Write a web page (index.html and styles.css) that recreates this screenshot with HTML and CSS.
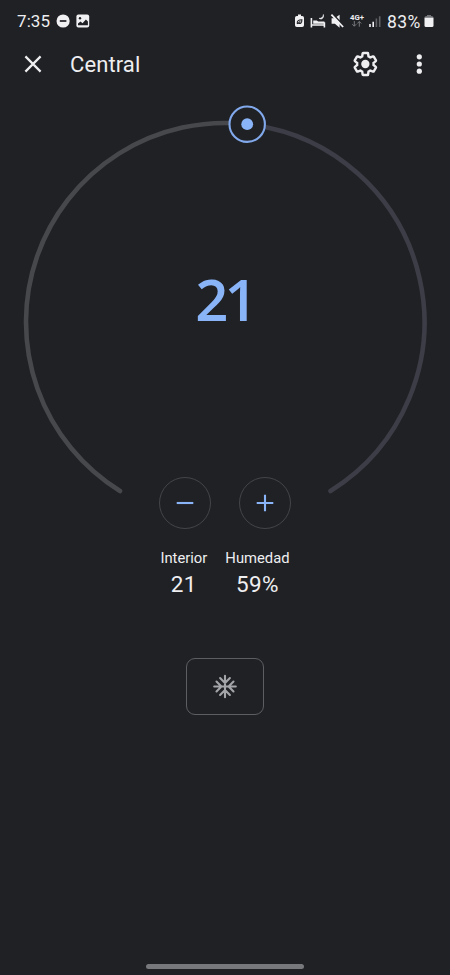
FILE: index.html
```html
<!DOCTYPE html>
<html lang="es">
<head>
<meta charset="utf-8">
<title>Central</title>
<link rel="stylesheet" href="styles.css">
</head>
<body>
<div class="screen">
  <div class="status">
    <span class="time">7:35</span>
    <svg class="notices" width="36" height="16" viewBox="0 0 36 16">
      <circle cx="8.1" cy="8" r="6.6" fill="#f1f1f4"/>
      <path d="M4.8 8h6.6" stroke="#202124" stroke-width="1.7"/>
      <rect x="21.4" y="1.6" width="12.8" height="12.8" rx="2" fill="#f1f1f4"/>
      <path d="M23 12.2v-1.7l2.5-2 2 1.7 3.4-3.6 2 2v3.6z" fill="#202124"/>
      <circle cx="25" cy="5.2" r="1.2" fill="#202124"/>
    </svg>
    <svg class="system" width="90" height="18" viewBox="0 0 90 18">
      <path d="M3 2.5h3V4h1.2Q9 4 9 5.8v7.4q0 1.8-1.8 1.8H1.8Q0 15 0 13.2V5.8Q0 4 1.8 4H3z" fill="#f1f1f4"/>
      <path d="M2.3 11.8c-.5-3 1.4-4 4.6-4.1.1 3.2-1.6 4.4-3.4 3.5m-1.2.6 3-2.5" fill="none" stroke="#202124" stroke-width="1.1"/>
      <path d="M16.4 6v9.6M16.4 13h13M29.4 10.2v5.4" fill="none" stroke="#f1f1f4" stroke-width="1.6"/>
      <path d="M18.2 8.5h3.5l1.5 1h6.2v2.2H18.2z" fill="#f1f1f4"/>
      <path d="M28.4 2.5c-.2 2.7-1.8 4-4.3 3.8 2.1 1.7 5.1.2 4.3-3.8" fill="#f1f1f4" stroke="#f1f1f4" stroke-width=".6"/>
      <path d="M36.6 6.3h3l5-3.6v13l-4.7-4h-3.3z" fill="#f1f1f4"/>
      <path d="M37.8 2.1 49.3 14.3" stroke="#202124" stroke-width="1.6"/>
      <path d="M36.4 2.6 48.1 15" stroke="#f1f1f4" stroke-width="1.8"/>
      <text class="network" x="55" y="7.6" textLength="14" lengthAdjust="spacingAndGlyphs">4G+</text>
      <path d="M59.3 9v5.2m-2-2 2 2 2-2M64.3 14.7V9.5m-2 2 2-2 2 2" fill="none" stroke="#77797d" stroke-width="1"/>
      <path d="M75 12v3M78.2 9.7V15" stroke="#f1f1f4" stroke-width="1.6"/>
      <path d="M81.4 6.5V15M84.7 4.2V15" stroke="#606266" stroke-width="1.6"/>
    </svg>
    <span class="percent">83%</span>
    <svg class="battery" width="10" height="14" viewBox="0 0 10 14">
      <path d="M3 1h4v1h.6Q9.5 2 9.5 4H.5q0-2 1.9-2H3z" fill="#727377"/>
      <path d="M.5 3.7h9v7.8q0 1.5-1.5 1.5H2Q.5 13 .5 11.5z" fill="#f1f1f4"/>
    </svg>
  </div>

  <div class="toolbar">
    <svg class="close" width="18" height="18" viewBox="0 0 18 18">
      <path d="m1.4 1.4 15.2 15.2M16.6 1.4 1.4 16.6" stroke="#eeeef1" stroke-width="2.2"/>
    </svg>
    <h1 class="title">Central</h1>
    <svg class="gear" width="28" height="28" viewBox="0 0 24 24">
      <g transform="translate(12.3 12) scale(.94) translate(-12 -12)">
        <path fill="none" stroke="#eeeef1" stroke-width="2.2" d="M19.43 12.98c.04-.32.07-.64.07-.98s-.03-.66-.07-.98l2.11-1.65c.19-.15.24-.42.12-.64l-2-3.46c-.09-.16-.26-.25-.44-.25-.06 0-.12.01-.17.03l-2.49 1c-.52-.4-1.08-.73-1.69-.98l-.38-2.65C14.46 2.18 14.25 2 14 2h-4c-.25 0-.46.18-.49.42l-.38 2.65c-.61.25-1.17.59-1.69.98l-2.49-1c-.06-.02-.12-.03-.18-.03-.17 0-.34.09-.43.25l-2 3.46c-.13.22-.07.49.12.64l2.11 1.65c-.04.32-.07.65-.07.98s.03.66.07.98l-2.11 1.65c-.19.15-.24.42-.12.64l2 3.46c.09.16.26.25.44.25.06 0 .12-.01.17-.03l2.49-1c.52.4 1.08.73 1.69.98l.38 2.65c.03.24.24.42.49.42h4c.25 0 .46-.18.49-.42l.38-2.65c.61-.25 1.17-.59 1.69-.98l2.49 1c.06.02.12.03.18.03.17 0 .34-.09.43-.25l2-3.46c.12-.22.07-.49-.12-.64z"/>
        <circle cx="12" cy="12" r="3.8" fill="#eeeef1"/>
      </g>
    </svg>
    <svg class="more" width="6" height="20" viewBox="0 0 6 20" fill="#eeeef1">
      <circle cx="3.3" cy="2.8" r="2.6"/><circle cx="3.3" cy="10" r="2.6"/><circle cx="3.3" cy="17.2" r="2.6"/>
    </svg>
  </div>

  <div class="dial">
    <svg class="arc" width="450" height="400" viewBox="0 100 450 400" fill="none">
      <path d="M120 491A199 199 0 0 1 247.2 124.2" stroke="#47484b" stroke-width="4.6" stroke-linecap="round"/>
      <path d="M247.2 124.2A199 199 0 0 1 330.5 491" stroke="#3c3d47" stroke-width="4.6" stroke-linecap="round"/>
      <circle cx="247.2" cy="124.2" r="17.7" fill="#202124" stroke="#81a9ec" stroke-width="2.1"/>
      <circle cx="247.2" cy="124.2" r="5.9" fill="#8ab4f8"/>
    </svg>
    <div class="target">21</div>
  </div>

  <div class="controls">
    <div class="round"><svg width="18" height="18" viewBox="0 0 18 18"><path d="M.7 9h16.6" stroke="#8ab4f8" stroke-width="2.1"/></svg></div>
    <div class="round"><svg width="18" height="18" viewBox="0 0 18 18"><path d="M.7 9h16.6M9 .7v16.6" stroke="#8ab4f8" stroke-width="2.1"/></svg></div>
  </div>

  <div class="readings">
    <div class="reading"><span class="label">Interior</span><span class="value">21</span></div>
    <div class="reading"><span class="label">Humedad</span><span class="value">59%</span></div>
  </div>

  <div class="mode">
    <svg width="26" height="26" viewBox="-13 -12.5 26 26" fill="none" stroke="#a3a5a9" stroke-width="2.1" stroke-linecap="round">
      <path d="M0-10.8v21.6M-10.8 0h21.6M-4.9-8.5 0-3.6l4.9-4.9M-4.9 8.5 0 3.6l4.9 4.9M-8.5-4.9-3.6 0l-4.9 4.9M8.5-4.9 3.6 0l4.9 4.9"/>
    </svg>
  </div>

  <div class="home"></div>
</div>
</body>
</html>
```
FILE: styles.css
```css
* { box-sizing: border-box; }
body { margin: 0; background: #202124; }
svg { display: block; flex: none; }
.screen {
  width: 450px;
  height: 975px;
  display: flex;
  flex-direction: column;
  align-items: center;
  overflow: hidden;
  background: #202124;
  color: #eeeef1;
  font-family: Roboto, sans-serif;
}
.status {
  width: 450px;
  height: 42px;
  padding: 0 16px 0 17px;
  display: flex;
  align-items: center;
  font-size: 17px;
  line-height: 20px;
}
.time { width: 38px; letter-spacing: .1px; }
.system { margin: 0 2px 0 auto; }
.network { font: 700 7px Roboto, sans-serif; fill: #eeeef1; }
.percent { width: 37px; padding-top: 1px; font-size: 17.5px; letter-spacing: .4px; white-space: nowrap; }
.toolbar {
  width: 450px;
  height: 44px;
  padding: 0 28px 0 24px;
  display: flex;
  align-items: center;
}
.title {
  margin: 2px auto 0 28px;
  font-size: 22px;
  line-height: 26px;
  font-weight: 400;
  letter-spacing: .1px;
}
.more { margin-left: 37px; }
.dial {
  width: 450px;
  height: 390px;
  margin-top: 14px;
  display: grid;
  justify-items: center;
  align-items: start;
}
.arc, .target { grid-area: 1 / 1; }
.target {
  margin: 165px 1px 0 0;
  font-family: "Open Sans", sans-serif;
  font-size: 58px;
  line-height: 68px;
  font-weight: 600;
  letter-spacing: -4px;
  color: #8ab4f8;
}
.controls {
  display: flex;
  gap: 28px;
  margin-top: -13px;
}
.round {
  width: 52px;
  height: 52px;
  border: 1px solid #44454a;
  border-radius: 50%;
  display: grid;
  place-items: center;
}
.readings {
  display: flex;
  gap: 18px;
  margin-top: 19px;
}
.reading {
  display: flex;
  flex-direction: column;
  align-items: center;
}
.label { font-size: 14.8px; line-height: 20px; }
.value { margin-top: 2px; font-size: 22.5px; line-height: 28px; letter-spacing: .4px; }
.mode {
  width: 78px;
  height: 57px;
  margin-top: 60px;
  border: 1.4px solid #5c5e61;
  border-radius: 9px;
  display: grid;
  place-items: center;
}
.home {
  width: 158px;
  height: 5px;
  margin: auto 0 6px;
  border-radius: 3px;
  background: #77787b;
}
```
